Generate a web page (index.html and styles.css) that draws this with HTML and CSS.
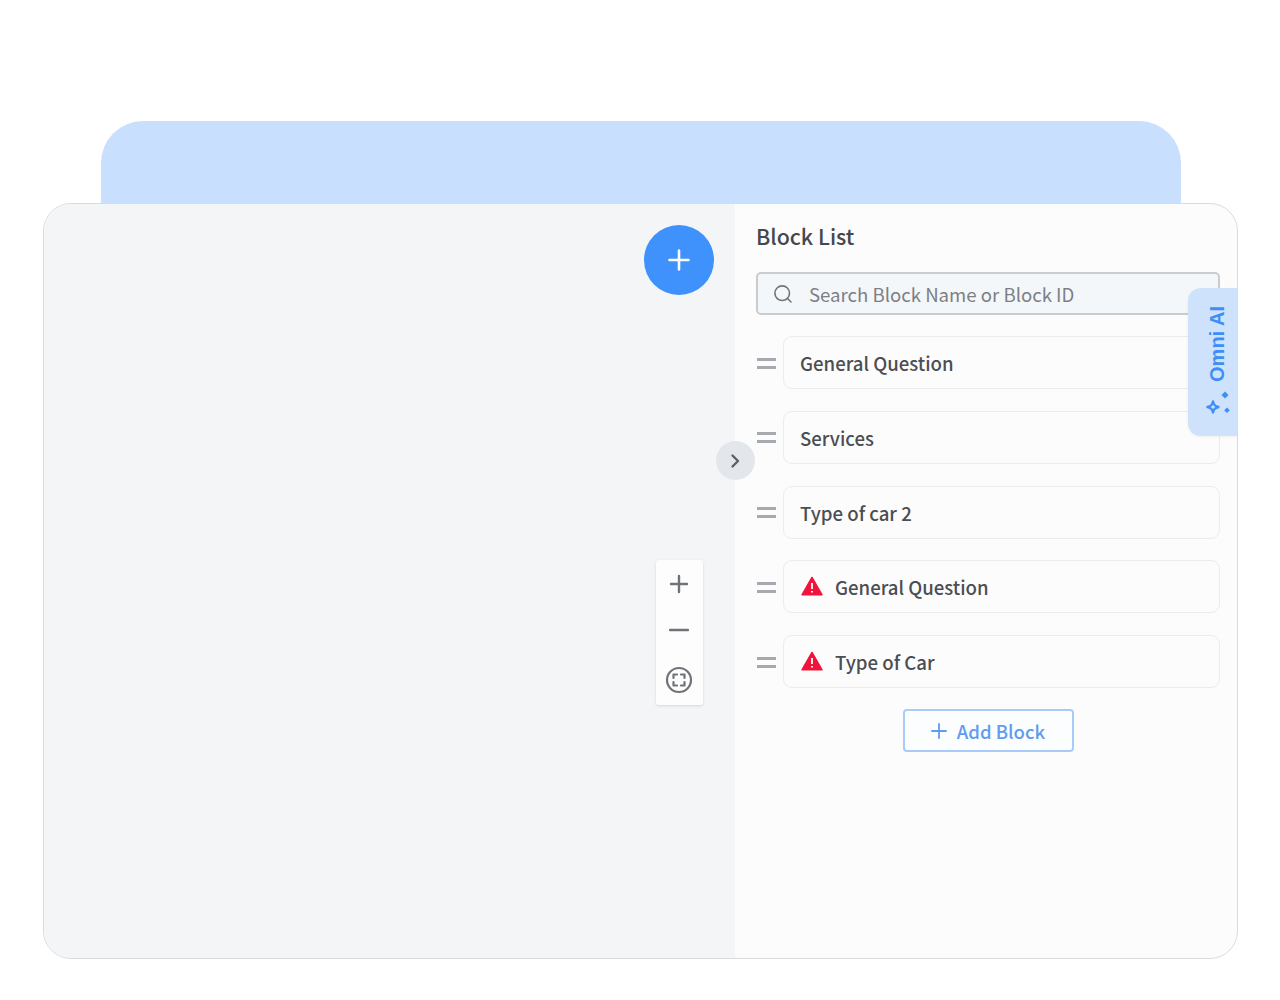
FILE: index.html
```html
<!DOCTYPE html>
<html lang="en">
<head>
<meta charset="utf-8">
<title>Block List</title>
<link rel="stylesheet" href="styles.css">
</head>
<body>
<div class="stage">
  <div class="backdrop"></div>
  <div class="card">
    <div class="canvas">
      <button class="fab" aria-label="Add">
        <svg width="22" height="22" viewBox="0 0 22 22"><path d="M11 1.500v19M1.500 11h19" stroke="#fff" stroke-width="2.600" stroke-linecap="round" fill="none"/></svg>
      </button>
      <div class="zoom">
        <svg width="20" height="20" viewBox="0 0 20 20"><path d="M10 2v16M2 10h16" stroke="#6f7378" stroke-width="2.400" stroke-linecap="round" fill="none"/></svg>
        <svg width="20" height="20" viewBox="0 0 20 20"><path d="M1 10h18" stroke="#6f7378" stroke-width="2.400" stroke-linecap="round" fill="none"/></svg>
        <svg width="28" height="28" viewBox="0 0 28 28" fill="none" stroke="#6f7378" stroke-width="2.200"><circle cx="14" cy="14" r="12"/><path d="M8.500 12v-3.500h3.500M16 8.500h3.500v3.500M19.500 16v3.500h-3.500M12 19.500h-3.500v-3.500" stroke-linecap="round" stroke-linejoin="round"/></svg>
      </div>
    </div>
    <button class="toggle" aria-label="Collapse">
      <svg width="12" height="16" viewBox="0 0 12 16"><path d="M2.500 2.500 8 8l-5.500 5.500" stroke="#5c6167" stroke-width="2.400" stroke-linecap="round" stroke-linejoin="round" fill="none"/></svg>
    </button>
    <div class="panel">
      <h2 class="title">Block List</h2>
      <div class="search">
        <svg width="20" height="20" viewBox="0 0 20 20" fill="none" stroke="#70757a" stroke-width="1.600"><circle cx="9.200" cy="9.200" r="7.300"/><path d="m14.500 14.500 3.500 3.500" stroke-linecap="round"/></svg>
        <span>Search Block Name or Block ID</span>
      </div>
      <ul class="blocks">
        <li class="row"><span class="grip"></span><div class="block">General Question</div></li>
        <li class="row"><span class="grip"></span><div class="block">Services</div></li>
        <li class="row"><span class="grip"></span><div class="block">Type of car 2</div></li>
        <li class="row"><span class="grip"></span><div class="block">
          <svg class="warn" width="22" height="20" viewBox="0 0 22 20"><path d="M11 1.500 21 18.800H1z" fill="#f0143c" stroke="#f0143c" stroke-width="1.500" stroke-linejoin="round"/><path d="M11 7v6M11 15v1.500" stroke="#fff" stroke-width="1.800" fill="none"/></svg>
          General Question</div></li>
        <li class="row"><span class="grip"></span><div class="block">
          <svg class="warn" width="22" height="20" viewBox="0 0 22 20"><path d="M11 1.500 21 18.800H1z" fill="#f0143c" stroke="#f0143c" stroke-width="1.500" stroke-linejoin="round"/><path d="M11 7v6M11 15v1.500" stroke="#fff" stroke-width="1.800" fill="none"/></svg>
          Type of Car</div></li>
      </ul>
      <button class="add">
        <svg width="16" height="16" viewBox="0 0 16 16"><path d="M8 1v14M1 8h14" stroke="#5f9bef" stroke-width="1.800" stroke-linecap="round" fill="none"/></svg>
        Add Block
      </button>
    </div>
    <div class="omni">
      <span class="omni-text">Omni AI</span>
      <svg class="omni-icon" width="28" height="28" viewBox="0 0 28 28" fill="none"><path d="M9 11.500c.9 3.600 1.900 4.600 5.500 5.500-3.600.9-4.600 1.900-5.500 5.500-.9-3.600-1.900-4.600-5.500-5.500 3.600-.9 4.600-1.900 5.500-5.500z" stroke="#3e8ff5" stroke-width="2.400" stroke-linejoin="round"/><path d="m21 1.500 3.500 3.500-3.500 3.500-3.500-3.500zM23 17.500l2.800 2.800-2.800 2.800-2.800-2.800z" fill="#3e8ff5"/></svg>
    </div>
  </div>
</div>
</body>
</html>
```
FILE: styles.css
```css
* { box-sizing: border-box; }
html, body { margin: 0; background: #fff; }
body { font-family: "Noto Sans CJK SC", "Noto Sans", sans-serif; }
.stage { width: 1280px; height: 1000px; padding: 121px 42px 0 43px; }
.backdrop { height: 82px; margin: 0 57px 0 58px; background: #c8dffd; border-radius: 42px 42px 0 0; }
.card { position: relative; display: flex; height: 756px; background: #fcfcfc; border: 1px solid #d9dbde; border-radius: 28px; overflow: hidden; }
.canvas { position: relative; flex: 0 0 691px; background: #f4f5f7; }
.fab { position: absolute; left: 600px; top: 21px; width: 70px; height: 70px; padding: 0; border: 0; border-radius: 50%; background: #3f91fb; display: flex; align-items: center; justify-content: center; }
.zoom { position: absolute; left: 612px; top: 356px; width: 47px; height: 145px; padding: 14px 0 11px; background: #fdfdfd; border-radius: 3px; box-shadow: 0 1px 3px rgba(0, 0, 0, .12); display: flex; flex-direction: column; align-items: center; justify-content: space-between; }
.zoom svg { transform: translateX(-1px); }
.toggle { position: absolute; left: 672px; top: 237px; width: 39px; height: 39px; padding: 0; border: 0; border-radius: 50%; background: #e3e7ec; display: flex; align-items: center; justify-content: center; z-index: 1; }
.panel { flex: 1; padding: 14px 17px 0 21px; display: flex; flex-direction: column; }
.title { margin: 0; font-size: 21.400px; line-height: 36px; font-weight: 500; color: #45484c; }
.search { margin-top: 18px; height: 43px; border: 2px solid #c9cccf; border-radius: 5px; background: #f4f7fa; padding-left: 15px; display: flex; align-items: center; gap: 16px; font-size: 18.600px; color: #7c8085; }
.search span { margin-top: -1px; }
.blocks { list-style: none; margin: 21px 0 0; padding: 0; display: flex; flex-direction: column; gap: 21.750px; }
.row { display: flex; align-items: center; gap: 7px; padding-left: 1px; }
.grip { flex: 0 0 19px; height: 11px; margin-top: 1px; border-top: 3px solid #a6a9ad; border-bottom: 3px solid #a6a9ad; }
.block { flex: 1; height: 53px; border: 1px solid #ebecee; border-radius: 9px; background: #fcfcfc; padding-left: 16px; display: flex; align-items: center; font-size: 18.600px; font-weight: 500; color: #4b4e52; }
.warn { margin: -1px 12px 0 1px; }
.add { align-self: center; margin: 21px 0 0; width: 171px; height: 43px; border: 2px solid #a9cbf8; border-radius: 4px; background: #fcfdff; display: flex; align-items: center; justify-content: center; gap: 10px; padding: 0; font: 500 18.500px "Noto Sans CJK SC", "Noto Sans", sans-serif; color: #5f9bef; }
.omni { position: absolute; right: 0; top: 84px; width: 49px; height: 148px; background: #cfe2fb; border-radius: 13px 0 0 13px; box-shadow: 0 1px 3px rgba(0, 0, 0, .06); display: flex; flex-direction: column; align-items: center; gap: 8px; padding-top: 18px; }
.omni-text { margin-left: 8px; writing-mode: vertical-rl; transform: rotate(180deg); font: 700 20px/24px "Liberation Sans", sans-serif; color: #3e8ff5; }
.omni-icon { margin-left: 11px; }
```
